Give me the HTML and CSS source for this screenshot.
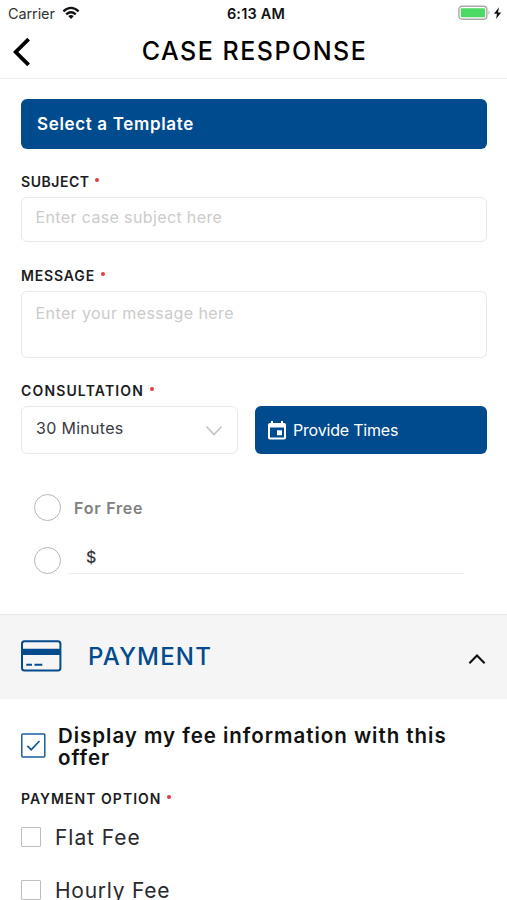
FILE: index.html
```html
<!DOCTYPE html>
<html lang="en">
<head>
<meta charset="utf-8">
<title>Case Response</title>
<link rel="stylesheet" href="styles.css">
</head>
<body>
<div class="status">
  <div class="status-left"><span class="carrier">Carrier</span>
    <svg width="18" height="14" viewBox="0 0 18 14" fill="none" stroke="#111" stroke-width="2.3"><path d="M1.4 5.3Q9-1.5 16.6 5.3M4.2 8.4Q9 4.2 13.8 8.4"/><path d="M6.2 10.1Q9 7.9 11.8 10.1L9 13Z" fill="#111" stroke="none"/></svg>
  </div>
  <span class="time">6:13 AM</span>
  <div class="status-right">
    <svg width="44" height="16" viewBox="0 0 44 16"><rect x=".9" y="1.2" width="28" height="13" rx="3.2" fill="#fff" stroke="#a9a9a9" stroke-width="1.4"/><rect x="2.8" y="3.2" width="24.2" height="9" rx="1" fill="#4cd964"/><path d="M30.5 5.5Q32.6 7.7 30.5 10Z" fill="#a9a9a9"/><path d="M41 2.2L36 8.7H39L38 14L43.2 7.4H40Z" fill="#111"/></svg>
  </div>
</div>
<header class="header">
  <svg class="back" width="18" height="30" viewBox="0 0 18 30" fill="none" stroke="#000" stroke-width="3.8"><path d="M15.6 2.2L2.7 15L15.6 27.8"/></svg>
  <h1 class="title">CASE RESPONSE</h1>
</header>
<main class="form">
  <button class="btn template"><span>Select a Template</span></button>
  <label class="label subject"><span>SUBJECT</span><i class="req"></i></label>
  <div class="field input"><span>Enter case subject here</span></div>
  <label class="label message"><span>MESSAGE</span><i class="req"></i></label>
  <div class="field textarea"><span>Enter your message here</span></div>
  <label class="label consult"><span>CONSULTATION</span><i class="req"></i></label>
  <div class="row">
    <div class="field select"><span>30 Minutes</span>
      <svg width="18" height="12" viewBox="0 0 18 12" fill="none" stroke="#c4c4c4" stroke-width="1.7"><path d="M1.5 1.5L9 9.5L16.5 1.5"/></svg>
    </div>
    <button class="btn provide">
      <svg width="18" height="19" viewBox="0 0 18 19"><path fill="#fff" fill-rule="evenodd" d="M3 0H5V2H13V0H15V2H16Q18 2 18 4V16.5Q18 18.5 16 18.5H2Q0 18.5 0 16.5V4Q0 2 2 2H3ZM2 6.5V16.5H16V6.5ZM9 9.3H14V14.3H9Z"/></svg>
      <span>Provide Times</span>
    </button>
  </div>
  <div class="radio free"><i class="circle"></i><span>For Free</span></div>
  <div class="radio paid"><i class="circle"></i><div class="amount">$</div></div>
</main>
<section class="payment">
  <svg width="41" height="32" viewBox="0 0 41 32" fill="none" stroke="#044b8e" stroke-width="2"><rect x="1" y="1.2" width="38.4" height="29.2" rx="2.5"/><path d="M1 11.8H39.5" stroke-width="6.2"/><path d="M5.3 24.7H11M13.5 24.7H21.3"/></svg>
  <h2 class="pay-title">PAYMENT</h2>
  <svg width="18" height="12" viewBox="0 0 18 12" fill="none" stroke="#111" stroke-width="2.1"><path d="M1.4 10.2L9 2.4L16.6 10.2"/></svg>
</section>
<section class="options">
  <div class="display">
    <svg width="25" height="25" viewBox="0 0 25 25" fill="none" stroke="#1d5c99" stroke-width="1.5"><rect x=".8" y=".9" width="23" height="23" rx="1" fill="#fff"/><path d="M6.2 12.8L10.3 16.7L18.5 8" stroke-width="1.8"/></svg>
    <p class="offer">Display my fee information with this offer</p>
  </div>
  <label class="label option"><span>PAYMENT OPTION</span><i class="req"></i></label>
  <div class="check flat"><i class="box"></i><span>Flat Fee</span></div>
  <div class="check hourly"><i class="box"></i><span>Hourly Fee</span></div>
</section>
</body>
</html>
```
FILE: styles.css
```css
* { box-sizing: border-box; }
html, body { margin: 0; height: 900px; overflow: hidden; }
body { background: #fff; color: #111; font-family: Inter, "Liberation Sans", sans-serif; }
span, h1, h2 { white-space: nowrap; }
svg { display: block; flex: none; }
h1, h2, p { margin: 0; }

.status { height: 28px; display: grid; grid-template-columns: 1fr auto 1fr; align-items: center; padding: 0 5px 2px 8px; font-size: 14.5px; }
.status-left { display: flex; align-items: center; gap: 7px; }
.carrier { color: #333; letter-spacing: -.1px; }
.time { font-weight: 600; letter-spacing: .2px; margin-left: 2px; }
.status-right { display: flex; justify-content: flex-end; }

.header { height: 51px; display: grid; grid-template-columns: 18px 1fr 18px; padding: 0 13px; border-bottom: 1px solid #ececec; }
.back { margin-top: 9px; }
.title { text-align: center; font-size: 25px; line-height: 46px; font-weight: 500; letter-spacing: 1.5px; padding-left: 2px; color: #000; }

.form { height: 535px; padding: 20px 20px 0 21px; }
.btn { display: flex; align-items: center; border: 0; border-radius: 6px; background: #004b8d; color: #fff; font-family: inherit; text-align: left; }
.template { width: 466px; height: 50px; padding: 0 16px 1px; font-size: 17px; font-weight: 600; letter-spacing: .65px; }
.label { display: flex; align-items: center; height: 16px; font-size: 14px; line-height: 16px; font-weight: 600; color: #1b1c22; }
.req { width: 4px; height: 4px; margin: -5px 0 0 5.5px; border-radius: 50%; background: #e23b43; }
.subject { margin-top: 25px; letter-spacing: .55px; }
.message { margin-top: 26px; letter-spacing: .85px; }
.consult { margin-top: 25px; letter-spacing: 1.15px; }
.field { border: 1px solid #e9e9e9; border-radius: 6px; padding: 0 14px; font-size: 16px; color: #cbcbcb; }
.input { height: 45px; margin-top: 7px; padding-left: 13.5px; line-height: 39px; letter-spacing: .37px; }
.textarea { height: 67px; margin-top: 7px; padding-left: 13.5px; line-height: 42px; letter-spacing: .41px; }
.row { display: flex; gap: 17px; margin-top: 7px; }
.select { width: 217px; height: 48px; display: flex; align-items: center; justify-content: space-between; color: #3a3a3f; padding-bottom: 4px; letter-spacing: .3px; }
.select svg { margin-top: 5px; }
.provide { width: 232px; height: 48px; gap: 7px; padding: 0 13px; font-size: 16px; letter-spacing: -.2px; }
.radio { display: flex; align-items: center; height: 27px; margin-left: 13px; }
.free { margin-top: 40px; color: #808080; font-size: 16px; font-weight: 600; gap: 13px; letter-spacing: .8px; }
.paid { margin-top: 26px; gap: 7px; }
.circle { flex: none; width: 27px; height: 27px; border: 1.5px solid #b5b5b5; border-radius: 50%; }
.amount { width: 396px; height: 32px; margin-top: -5px; padding-left: 18px; line-height: 30px; font-size: 16px; font-weight: 500; color: #333; border-bottom: 1px solid #ececec; }

.payment { height: 85px; display: flex; align-items: center; padding: 0 21px 2px; background: #f5f5f5; border-top: 1px solid #e9e9e9; }
.pay-title { flex: 1; margin-left: 26px; font-size: 24px; font-weight: 500; letter-spacing: 1.2px; color: #044b8e; }
.payment svg:last-child { margin-top: 5px; }

.options { padding: 25px 21px 0; }
.display { display: flex; align-items: flex-start; gap: 12px; height: 44px; }
.display svg { margin-top: 9px; }
.offer { width: 410px; margin-top: 1px; font-size: 20.5px; line-height: 22px; font-weight: 600; letter-spacing: .97px; }
.option { margin-top: 23px; letter-spacing: 1.03px; }
.check { display: flex; align-items: center; gap: 14px; height: 20px; font-size: 21px; line-height: 22px; color: #2a2a2e; }
.flat { margin-top: 20px; letter-spacing: .95px; }
.hourly { margin-top: 33px; letter-spacing: .75px; }
.check span { padding-top: 1px; }
.box { width: 20px; height: 20px; border: 1.5px solid #bdbdbd; border-radius: 1px; }
```
